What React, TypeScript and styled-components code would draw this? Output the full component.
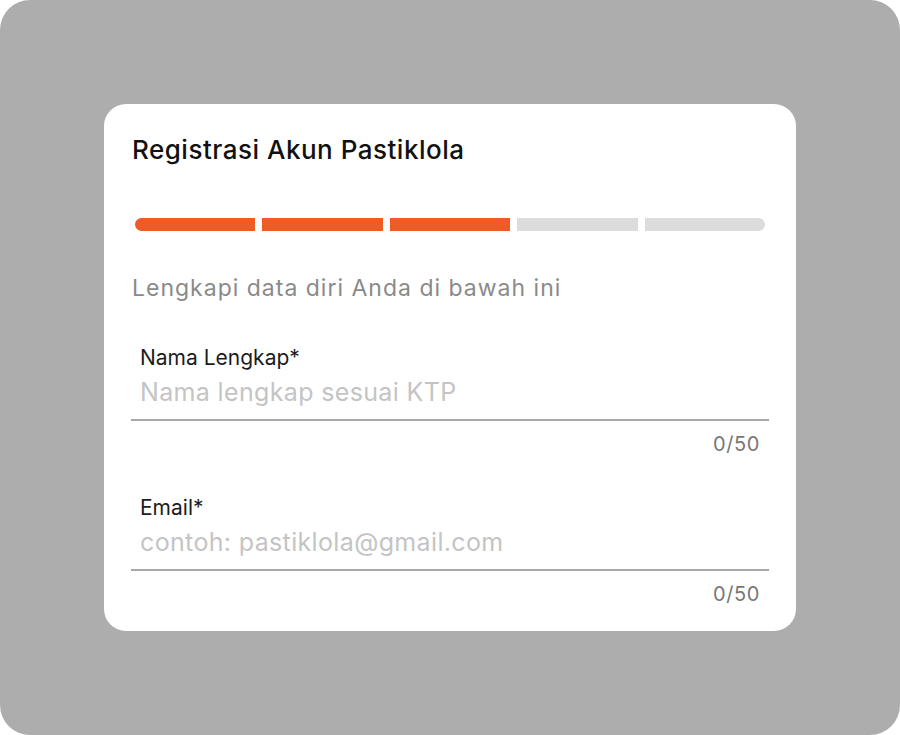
import styled, { createGlobalStyle } from "styled-components";

const GlobalStyle = createGlobalStyle`
  html, body {
    margin: 0;
    padding: 0;
    background: #ffffff;
  }
  body {
    font-family: Inter, "Noto Sans", sans-serif;
  }
`;

const Frame = styled.div`
  width: 900px;
  height: 735px;
  background: #adadad;
  border-radius: 30px;
  display: flex;
  align-items: center;
  justify-content: center;
`;

const Card = styled.div`
  width: 692px;
  height: 527px;
  box-sizing: border-box;
  background: #ffffff;
  border-radius: 22px;
  padding: 28px 27px 0;
  display: flex;
  flex-direction: column;
`;

const Title = styled.h1`
  margin: 0;
  font-size: 26px;
  line-height: 36px;
  font-weight: 500;
  letter-spacing: 0.5px;
  color: #111111;
  padding-left: 1px;
`;

const Progress = styled.div`
  display: flex;
  gap: 7px;
  margin: 50px 4px 0;
  height: 13px;
  border-radius: 7px;
  overflow: hidden;
`;

const Segment = styled.div<{ $done: boolean }>`
  flex: 1;
  background: ${(p) => (p.$done ? "#f05a27" : "#dcdcdc")};
`;

const Subtitle = styled.p`
  margin: 42px 0 0;
  padding-left: 1px;
  font-size: 23px;
  line-height: 30px;
  color: #8a8a8a;
  letter-spacing: 1px;
`;

const Field = styled.div<{ $gap: number }>`
  display: flex;
  flex-direction: column;
  margin-top: ${(p) => p.$gap}px;
`;

const Label = styled.label`
  padding-left: 9px;
  font-size: 21px;
  line-height: 24px;
  color: #1c1c1c;
`;

const Input = styled.input`
  border: none;
  border-bottom: 2px solid #a8a8a8;
  outline: none;
  padding: 7px 9px 12px;
  font-family: inherit;
  font-size: 25px;
  line-height: 30px;
  letter-spacing: 0.35px;
  color: #222;
  background: transparent;
  &::placeholder {
    color: #c4c4c4;
  }
`;

const Counter = styled.div`
  align-self: flex-end;
  padding-right: 9px;
  margin-top: 11px;
  font-size: 20px;
  line-height: 24px;
  color: #777777;
  letter-spacing: 0.6px;
`;

const steps = [true, true, true, false, false];

const fields = [
  { label: "Nama Lengkap*", placeholder: "Nama lengkap sesuai KTP", gap: 43 },
  { label: "Email*", placeholder: "contoh: pastiklola@gmail.com", gap: 40 },
];

export default function App() {
  return (
    <>
      <GlobalStyle />
      <Frame>
        <Card>
          <Title>Registrasi Akun Pastiklola</Title>
          <Progress>
            {steps.map((done, i) => (
              <Segment key={i} $done={done} />
            ))}
          </Progress>
          <Subtitle>Lengkapi data diri Anda di bawah ini</Subtitle>
          {fields.map((f) => (
            <Field key={f.label} $gap={f.gap}>
              <Label>{f.label}</Label>
              <Input placeholder={f.placeholder} maxLength={50} />
              <Counter>0/50</Counter>
            </Field>
          ))}
        </Card>
      </Frame>
    </>
  );
}
